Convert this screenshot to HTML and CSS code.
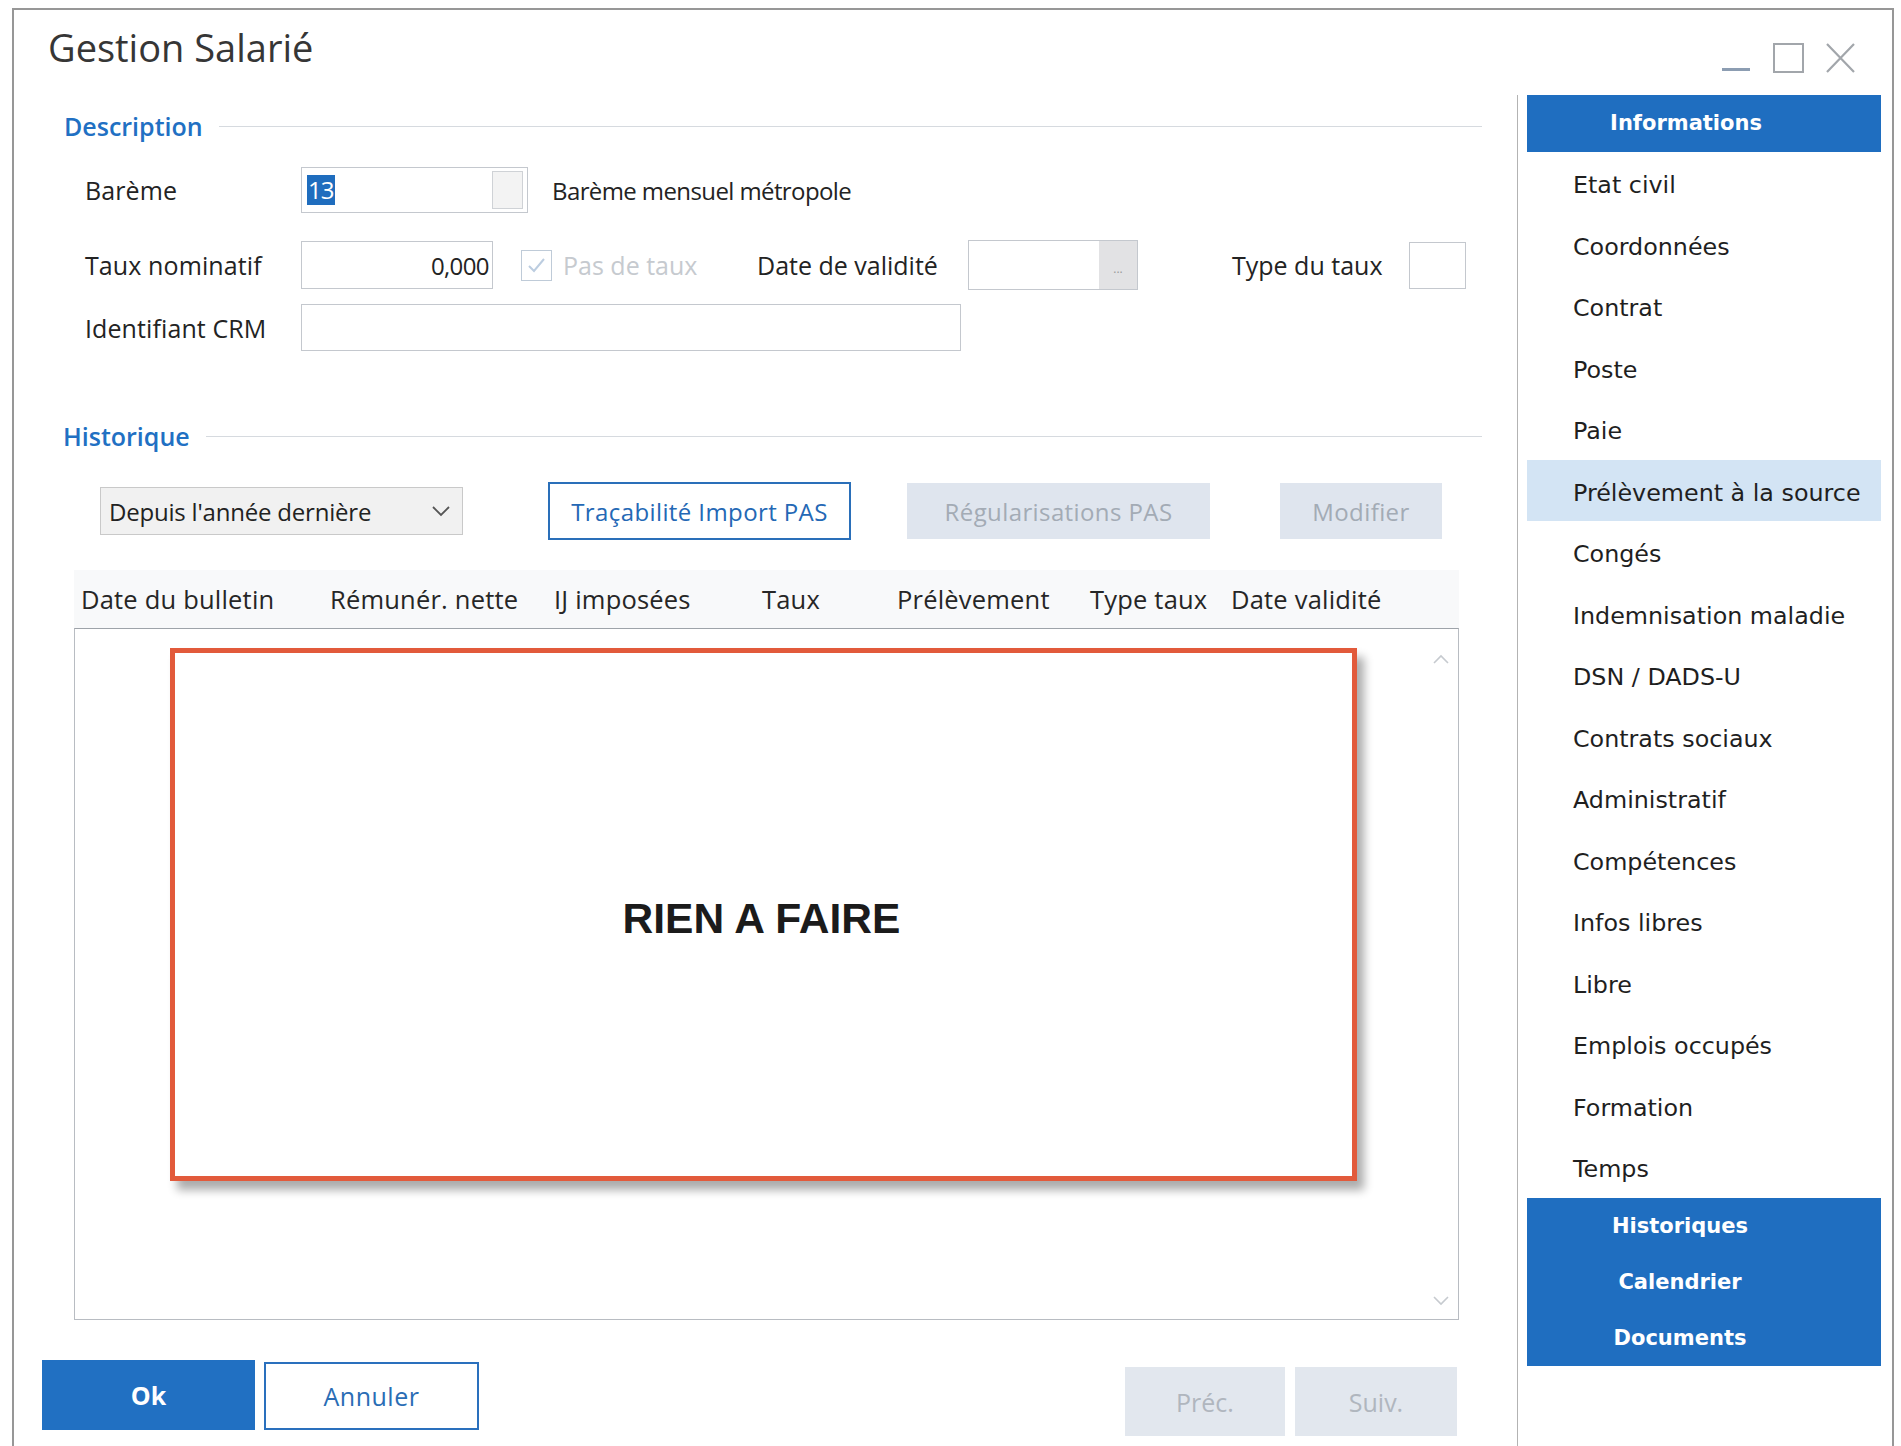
FILE: index.html
```html
<!DOCTYPE html>
<html lang="fr">
<head>
<meta charset="utf-8">
<title>Gestion Salarié</title>
<link rel="stylesheet" href="styles.css">
</head>
<body>
<div class="window">
  <header class="titlebar">
    <h1 class="title">Gestion Salarié</h1>
    <div class="winctl">
      <span class="ctl-min"></span>
      <span class="ctl-max"></span>
      <svg class="ctl-close" width="31" height="30" viewBox="0 0 31 30"><path d="M2 1 L29 29 M29 1 L2 29" stroke="#a2a6ab" stroke-width="2.2" fill="none"/></svg>
    </div>
  </header>
  <div class="body">
    <main class="main">
      <div class="section-head"><span class="section-title">Description</span><span class="rule"></span></div>
      <div class="form">
        <div class="row r1">
          <span class="lbl">Barème</span>
          <div class="input bareme"><span class="sel">13</span><span class="ibtn"></span></div>
          <span class="val">Barème mensuel métropole</span>
        </div>
        <div class="row r2">
          <span class="lbl">Taux nominatif</span>
          <div class="input taux">0,000</div>
          <span class="check"><svg width="31" height="31" viewBox="0 0 31 31"><path d="M8 16 L13 21 L23 9" stroke="#bccde0" stroke-width="2" fill="none"/></svg></span>
          <span class="pas">Pas de taux</span>
          <span class="lbl2">Date de validité</span>
          <div class="input date"><span class="dbtn">...</span></div>
          <span class="lbl3">Type du taux</span>
          <div class="input type"></div>
        </div>
        <div class="row r3">
          <span class="lbl">Identifiant CRM</span>
          <div class="input crm"></div>
        </div>
      </div>
      <div class="section-head hist"><span class="section-title">Historique</span><span class="rule"></span></div>
      <div class="toolbar">
        <div class="select"><span>Depuis l'année dernière</span><svg width="18" height="11" viewBox="0 0 18 11"><path d="M1 1 L9 9 L17 1" stroke="#555" stroke-width="1.8" fill="none"/></svg></div>
        <button class="btn outline trac">Traçabilité Import PAS</button>
        <button class="btn disabled regul">Régularisations PAS</button>
        <button class="btn disabled modif">Modifier</button>
      </div>
      <div class="grid">
        <div class="grid-head">
          <span class="col first">Date du bulletin</span>
          <span class="col">Rémunér. nette</span>
          <span class="col">IJ imposées</span>
          <span class="col">Taux</span>
          <span class="col">Prélèvement</span>
          <span class="col">Type taux</span>
          <span class="col">Date validité</span>
        </div>
        <div class="grid-body">
          <div class="grid-content">
            <div class="note">RIEN A FAIRE</div>
          </div>
          <div class="scroll">
            <svg width="16" height="10" viewBox="0 0 16 10"><path d="M1 9 L8 2 L15 9" stroke="#c6cacf" stroke-width="1.6" fill="none"/></svg>
            <svg width="16" height="10" viewBox="0 0 16 10"><path d="M1 1 L8 8 L15 1" stroke="#c6cacf" stroke-width="1.6" fill="none"/></svg>
          </div>
        </div>
      </div>
      <div class="footer">
        <button class="fbtn ok">Ok</button>
        <button class="fbtn cancel">Annuler</button>
        <div class="nav-btns">
          <button class="fbtn gray prev">Préc.</button>
          <button class="fbtn gray next">Suiv.</button>
        </div>
      </div>
    </main>
    <aside class="side">
      <div class="side-head">Informations</div>
      <ul class="side-list">
        <li>Etat civil</li>
        <li>Coordonnées</li>
        <li>Contrat</li>
        <li>Poste</li>
        <li>Paie</li>
        <li class="active">Prélèvement à la source</li>
        <li>Congés</li>
        <li>Indemnisation maladie</li>
        <li>DSN / DADS-U</li>
        <li>Contrats sociaux</li>
        <li>Administratif</li>
        <li>Compétences</li>
        <li>Infos libres</li>
        <li>Libre</li>
        <li>Emplois occupés</li>
        <li>Formation</li>
        <li>Temps</li>
      </ul>
      <ul class="side-blue">
        <li>Historiques</li>
        <li>Calendrier</li>
        <li>Documents</li>
      </ul>
    </aside>
  </div>
</div>
</body>
</html>
```

FILE: styles.css
```css
* { box-sizing: border-box; }

body {
  margin: 0;
  width: 1901px;
  height: 1446px;
  overflow: hidden;
  background: #ffffff;
  font-family: "Open Sans", "Liberation Sans", sans-serif;
  color: #232323;
}

.window {
  margin: 8px 0 0 12px;
  width: 1882px;
  height: 1438px;
  border: 2px solid #979797;
  border-bottom: none;
  display: flex;
  flex-direction: column;
}

/* title bar */
.titlebar {
  height: 85px;
  display: flex;
  justify-content: space-between;
  align-items: flex-start;
  flex: none;
}

.title {
  margin: 0;
  padding: 14px 0 0 34px;
  font-size: 38px;
  line-height: 46px;
  font-weight: 400;
  color: #363636;
}

.winctl {
  display: flex;
  align-items: flex-end;
  padding: 33px 36px 0 0;
  height: 63px;
}

.ctl-min {
  width: 28px;
  height: 3px;
  background: #8c9db2;
  margin-bottom: 2px;
}

.ctl-max {
  width: 31px;
  height: 30px;
  border: 2px solid #a2a6ab;
  margin-left: 23px;
}

.ctl-close {
  margin-left: 21px;
  display: block;
}

/* body */
.body {
  flex: 1;
  display: flex;
}

.main {
  flex: 1;
  min-width: 0;
  display: flex;
  flex-direction: column;
}

.section-head {
  display: flex;
  align-items: center;
  margin-top: 16px;
  height: 30px;
  padding: 0 35px 0 50px;
}

.section-head.hist {
  margin-top: 70px;
  padding-left: 49px;
}

.section-title {
  font-size: 25px;
  line-height: 30px;
  font-weight: 600;
  color: #2170c3;
}

.rule {
  flex: 1;
  height: 1px;
  margin-left: 16px;
  background: #d6dadf;
}

/* form */
.form {
  margin-left: 71px;
}

.row {
  display: flex;
  align-items: center;
}

.r1 { margin-top: 26px; height: 46px; }
.r2 { margin-top: 24px; height: 56px; }
.r3 { margin-top: 11px; height: 47px; }

.lbl {
  width: 216px;
  font-size: 25px;
  letter-spacing: 0.1px;
}

.input {
  border: 1px solid #c4c8ce;
  background: #fff;
  height: 46px;
  display: flex;
  align-items: center;
}

.bareme {
  width: 227px;
  justify-content: space-between;
  padding: 0 4px 0 5px;
}

.sel {
  background: #1f6dbe;
  color: #fff;
  font-size: 24px;
  line-height: 30px;
  letter-spacing: -1px;
  padding: 0 2px 0 1px;
}

.ibtn {
  width: 31px;
  height: 38px;
  border: 1px solid #cfd2d6;
  background: #f3f3f3;
}

.val {
  margin-left: 24px;
  font-size: 24px;
  letter-spacing: -0.6px;
}

.taux {
  width: 192px;
  height: 48px;
  justify-content: flex-end;
  padding-right: 3px;
  font-size: 24px;
  letter-spacing: -0.6px;
}

.check {
  margin-left: 28px;
  width: 31px;
  height: 31px;
  border: 1px solid #bfcbd8;
  display: block;
}

.check svg { display: block; margin: -1px 0 0 -1px; }

.pas {
  margin-left: 11px;
  width: 194px;
  font-size: 25px;
  color: #c6cacf;
}

.lbl2 {
  width: 211px;
  font-size: 25px;
}

.date {
  width: 170px;
  height: 50px;
  justify-content: flex-end;
}

.dbtn {
  width: 38px;
  height: 48px;
  background: #e2e2e4;
  color: #9a9a9a;
  font-size: 12px;
  line-height: 56px;
  text-align: center;
}

.lbl3 {
  margin-left: 94px;
  width: 177px;
  font-size: 25px;
}

.type {
  width: 57px;
  height: 47px;
}

.crm {
  width: 660px;
  height: 47px;
}

/* toolbar */
.toolbar {
  display: flex;
  align-items: center;
  margin-top: 31px;
  height: 58px;
  padding-left: 86px;
}

.select {
  width: 363px;
  height: 48px;
  background: #f1f1f1;
  border: 1px solid #c9c9c9;
  display: flex;
  align-items: center;
  justify-content: space-between;
  padding: 0 12px 0 8px;
  font-size: 24px;
  letter-spacing: -0.2px;
  color: #222;
}

.select svg { display: block; }

.btn {
  font-family: "Open Sans", "Liberation Sans", sans-serif;
  font-size: 24px;
  letter-spacing: 0.4px;
  padding: 0;
  background: #fff;
  border: none;
}

.outline {
  margin-left: 85px;
  width: 303px;
  height: 58px;
  border: 2px solid #2a6fb9;
  color: #2468b5;
}

.disabled {
  background: #dfe5ee;
  color: #a3abb5;
  height: 56px;
}

.regul { margin-left: 56px; width: 303px; }
.modif { margin-left: 70px; width: 162px; }

/* grid */
.grid {
  margin: 30px 0 0 60px;
  width: 1385px;
}

.grid-head {
  height: 58px;
  display: grid;
  grid-template-columns: 249px 224px 208px 135px 193px 141px 1fr;
  align-items: center;
  padding-left: 7px;
  background: #f8f9fa;
  font-size: 25.5px;
  letter-spacing: 0.2px;
  color: #262626;
}

.col { white-space: nowrap; }

.grid-body {
  height: 692px;
  border: 1px solid #b8bcc2;
  border-top-color: #9ea3a9;
  display: flex;
}

.grid-content {
  flex: 1;
  padding: 19px 0 0 95px;
}

.note {
  width: 1187px;
  height: 533px;
  border: 5px solid #e25a3b;
  box-shadow: 7px 9px 9px rgba(0, 0, 0, 0.33);
  display: flex;
  align-items: center;
  justify-content: center;
  padding: 8px 4px 0 0;
  font-family: "Liberation Sans", Arial, sans-serif;
  font-weight: 700;
  font-size: 42.5px;
  color: #1b1b1b;
  background: #fff;
}

.scroll {
  width: 34px;
  display: flex;
  flex-direction: column;
  justify-content: space-between;
  align-items: center;
  padding: 25px 0 13px;
}

.scroll svg { display: block; }

/* footer */
.footer {
  display: flex;
  align-items: flex-start;
  margin-top: 40px;
  padding: 0 60px 0 28px;
}

.fbtn {
  font-family: "Open Sans", "Liberation Sans", sans-serif;
  font-size: 25px;
  padding: 0;
  border: none;
}

.ok {
  width: 213px;
  height: 70px;
  background: #2170c2;
  color: #fff;
  font-weight: 700;
}

.cancel {
  margin-left: 9px;
  margin-top: 2px;
  width: 215px;
  height: 68px;
  background: #fff;
  border: 2px solid #2a70bd;
  color: #2a6db5;
  letter-spacing: 0.5px;
}

.nav-btns {
  margin-left: auto;
  margin-top: 7px;
  display: flex;
  gap: 10px;
}

.gray {
  height: 69px;
  background: #e2e7ee;
  color: #b0b6be;
}

.prev { width: 160px; }
.next { width: 162px; }

/* side nav */
.side {
  width: 375px;
  flex: none;
  border-left: 1px solid #b3b3b3;
  padding: 0 11px 0 9px;
  font-family: "DejaVu Sans", Verdana, sans-serif;
}

.side-head {
  height: 57px;
  background: #1f6ec0;
  color: #fff;
  font-weight: 700;
  font-size: 21px;
  line-height: 57px;
  text-align: center;
  padding-right: 36px;
}

.side-list, .side-blue {
  list-style: none;
  margin: 0;
  padding: 0;
}

.side-list li {
  height: 61.5px;
  line-height: 61.5px;
  padding: 3px 0 0 46px;
  font-size: 23.8px;
  color: #1f1f1f;
  white-space: nowrap;
}

.side-list li.active {
  background: #d3e4f4;
}

.side-blue {
  background: #1f6ec0;
}

.side-blue li {
  height: 56px;
  line-height: 56px;
  text-align: center;
  padding-right: 48px;
  color: #fff;
  font-weight: 700;
  font-size: 21px;
}
```
